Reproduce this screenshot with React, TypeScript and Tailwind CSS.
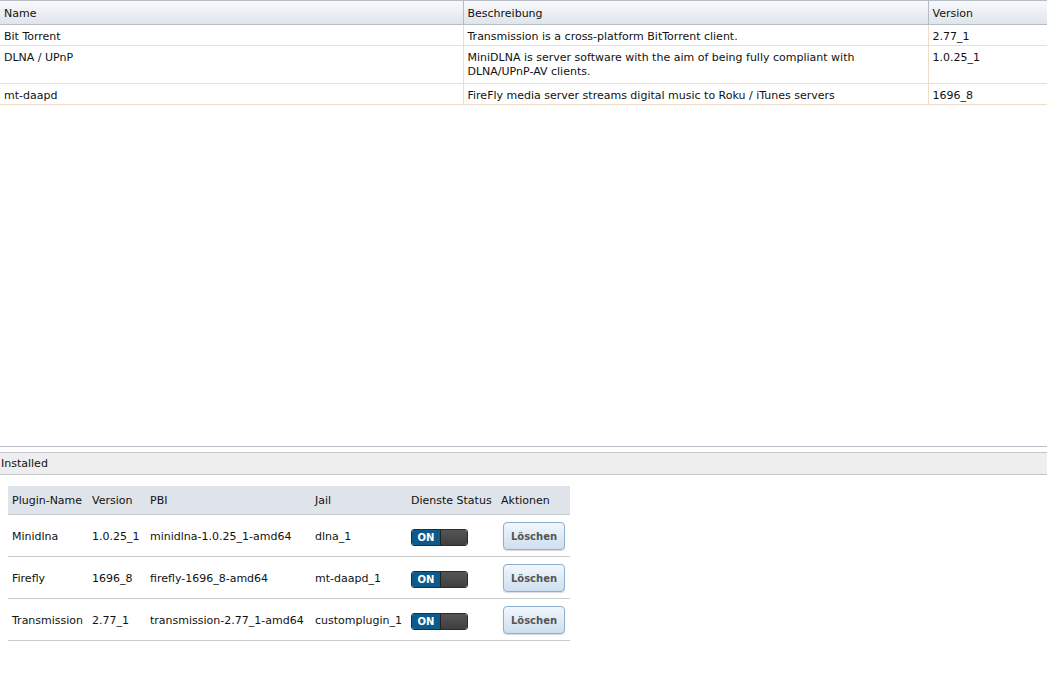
const available = [
  {
    name: "Bit Torrent",
    description: "Transmission is a cross-platform BitTorrent client.",
    version: "2.77_1",
    height: "h-[21px]",
  },
  {
    name: "DLNA / UPnP",
    description:
      "MiniDLNA is server software with the aim of being fully compliant with DLNA/UPnP-AV clients.",
    version: "1.0.25_1",
    height: "h-[38px]",
  },
  {
    name: "mt-daapd",
    description: "FireFly media server streams digital music to Roku / iTunes servers",
    version: "1696_8",
    height: "h-[21px]",
  },
];

const installed = [
  { name: "Minidlna", version: "1.0.25_1", pbi: "minidlna-1.0.25_1-amd64", jail: "dlna_1" },
  { name: "Firefly", version: "1696_8", pbi: "firefly-1696_8-amd64", jail: "mt-daapd_1" },
  { name: "Transmission", version: "2.77_1", pbi: "transmission-2.77_1-amd64", jail: "customplugin_1" },
];

const Toggle = () => (
  <div className="flex h-[17px] w-[57px] overflow-hidden rounded-[3px] border border-[#2b2b2b]">
    <span className="flex w-[28px] items-center justify-center bg-[#0c5b8c] text-[10px] font-bold text-white">
      ON
    </span>
    <span className="flex-1 border-l border-[#222] bg-gradient-to-b from-[#555] to-[#3f3f3f]" />
  </div>
);

const DeleteButton = () => (
  <button className="ml-[2px] h-[28px] w-[62px] rounded-[4px] border border-[#8fadcc] bg-gradient-to-b from-[#f2f7fc] to-[#cddff0] text-[10px] font-bold text-[#555] shadow-[0_1px_1px_rgba(0,0,0,0.15)]">
    Löschen
  </button>
);

export default function App() {
  return (
    <div
      className="flex h-[675px] w-[1047px] flex-col bg-white text-[11px] text-[#111]"
      style={{ fontFamily: '"DejaVu Sans", Verdana, sans-serif' }}
    >
      {/* available plugins grid */}
      <div className="h-[446px]">
        <table className="w-full table-fixed border-collapse">
          <colgroup>
            <col className="w-[463px]" />
            <col className="w-[465px]" />
            <col />
          </colgroup>
          <thead>
            <tr className="h-[24px] bg-gradient-to-b from-[#f8f9fb] to-[#dfe4ea] text-left">
              <th className="border-t border-b border-[#b5bcc6] px-[4px] pt-[3px] font-normal">Name</th>
              <th className="border-t border-b border-l border-[#b5bcc6] px-[4px] pt-[3px] font-normal">
                Beschreibung
              </th>
              <th className="border-t border-b border-l border-[#b5bcc6] px-[4px] pt-[3px] font-normal">
                Version
              </th>
            </tr>
          </thead>
          <tbody>
            {available.map((p) => (
              <tr key={p.name} className={`${p.height} border-b border-[#efdcc9] align-top`}>
                <td className="px-[4px] pt-[5px] leading-[14px]">{p.name}</td>
                <td className="border-l border-[#efdcc9] px-[4px] pt-[5px] pr-[60px] leading-[14px]">
                  {p.description}
                </td>
                <td className="border-l border-[#efdcc9] px-[4px] pt-[5px] leading-[14px]">{p.version}</td>
              </tr>
            ))}
          </tbody>
        </table>
      </div>

      {/* splitter */}
      <div className="h-[6px] border-t border-[#b8bec8]" />

      <div className="flex h-[23px] items-center border-t border-b border-[#c3c7cd] bg-[#eeeeee] pt-[2px] pl-[1px]">
        Installed
      </div>

      {/* installed plugins */}
      <div className="pl-[8px] pt-[11px]">
        <table className="w-[562px] table-fixed border-collapse text-left">
          <colgroup>
            <col className="w-[80px]" />
            <col className="w-[58px]" />
            <col className="w-[165px]" />
            <col className="w-[96px]" />
            <col className="w-[90px]" />
            <col />
          </colgroup>
          <thead>
            <tr className="h-[28px] border-b border-[#c8ccd0] bg-[#dfe4ea]">
              <th className="pl-[4px] pt-[3px] font-normal whitespace-nowrap">Plugin-Name</th>
              <th className="pl-[4px] pt-[3px] font-normal">Version</th>
              <th className="pl-[4px] pt-[3px] font-normal">PBI</th>
              <th className="pl-[4px] pt-[3px] font-normal">Jail</th>
              <th className="pl-[4px] pt-[3px] font-normal whitespace-nowrap">Dienste Status</th>
              <th className="pl-[4px] pt-[3px] font-normal">Aktionen</th>
            </tr>
          </thead>
          <tbody>
            {installed.map((p) => (
              <tr key={p.name} className="h-[42px] border-b border-[#cccccc]">
                <td className="pl-[4px] pt-[5px] whitespace-nowrap">{p.name}</td>
                <td className="pl-[4px] pt-[5px] whitespace-nowrap">{p.version}</td>
                <td className="pl-[4px] pt-[5px] whitespace-nowrap">{p.pbi}</td>
                <td className="pl-[4px] pt-[5px] whitespace-nowrap">{p.jail}</td>
                <td className="pl-[4px] pt-[4px]">
                  <Toggle />
                </td>
                <td className="pl-[4px] pt-[2px]">
                  <DeleteButton />
                </td>
              </tr>
            ))}
          </tbody>
        </table>
      </div>
    </div>
  );
}
